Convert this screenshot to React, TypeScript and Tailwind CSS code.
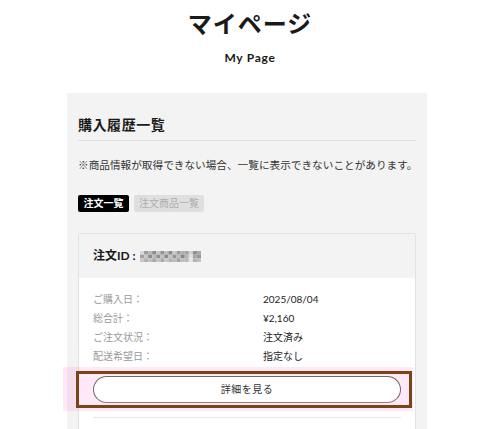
import React from "react";

const mosaic = [
  [0xd8, 0x9a, 0xb8, 0x8c, 0xc4, 0x94, 0xbc, 0x88, 0xc8, 0x9c, 0xb0, 0xa4, 0xd0, 0x90, 0xa8],
  [0xa0, 0xc8, 0x8c, 0xbc, 0x90, 0xc0, 0x8a, 0xc4, 0x94, 0xbc, 0x88, 0xb4, 0xe0, 0xa8, 0x98],
  [0xc8, 0xb0, 0xc0, 0xa8, 0xc4, 0xac, 0xc8, 0xb0, 0xbc, 0xa4, 0xc0, 0xb8, 0xe4, 0xb4, 0xc0],
];

function Mosaic() {
  return (
    <svg width="61" height="11" viewBox="0 0 60 12" preserveAspectRatio="none" className="block">
      {mosaic.map((row, r) =>
        row.map((v, c) => {
          const h = v.toString(16);
          return <rect key={`${r}-${c}`} x={c * 4} y={r * 4} width="4" height="4" fill={`#${h}${h}${h}`} />;
        })
      )}
    </svg>
  );
}

const rows: [string, string][] = [
  ["ご購入日：", "2025/08/04"],
  ["総合計：", "¥2,160"],
  ["ご注文状況：", "注文済み"],
  ["配送希望日：", "指定なし"],
];

export default function App() {
  return (
    <div className="min-h-[429px] h-[429px] overflow-hidden bg-white text-[#1a1a1a] font-['Lato','Noto_Sans_CJK_JP',sans-serif]">
      <h1 className="pt-[9px] text-center text-[24px] font-bold leading-[30px] tracking-[0.04em]">マイページ</h1>
      <p className="mt-[12px] text-center text-[12px] font-bold leading-[14px] tracking-[0.06em]">My Page</p>

      <div className="ml-[67px] mt-[28px] w-[360px] bg-[#f3f3f3] px-[11px] pt-[22px] pb-[40px]">
        <h2 className="border-b border-[#dedede] pb-[5px] text-[14px] font-bold leading-[20px] tracking-[0.04em]">
          購入履歴一覧
        </h2>
        <p className="mt-[16px] text-[10.65px] leading-[16px] text-[#333] whitespace-nowrap">
          ※商品情報が取得できない場合、一覧に表示できないことがあります。
        </p>

        <div className="mt-[22px] flex gap-[5px]">
          <span className="flex h-[17px] items-center rounded-[2px] bg-black px-[5.5px] text-[10px] font-bold text-white">
            注文一覧
          </span>
          <span className="flex h-[17px] items-center rounded-[2px] bg-[#dfdfdf] px-[5px] text-[10px] text-[#adadad]">
            注文商品一覧
          </span>
        </div>

        <div className="mt-[21px] rounded-[2px] border border-[#e2e2e2] bg-white">
          <div className="flex h-[44px] items-center bg-[#f3f3f3] px-[14px]">
            <span className="text-[12px] font-bold leading-[16px]">注文ID :</span>
            <span className="ml-[4px]">
              <Mosaic />
            </span>
          </div>
          <div className="px-[14px] pt-[12px]">
            <div className="grid grid-cols-[170px_1fr] text-[10px] leading-[19px]">
              {rows.map(([k, v]) => (
                <React.Fragment key={k}>
                  <span className="text-[#9a9a9a]">{k}</span>
                  <span className="text-[#222]">{v}</span>
                </React.Fragment>
              ))}
            </div>

            <div className="relative mt-[10px]">
              <div className="pointer-events-none absolute -left-[30px] -right-[12px] -top-[9px] -bottom-[8px] bg-[rgba(255,0,170,0.09)]" />
              <button className="relative flex h-[27px] w-full items-center justify-center rounded-full border border-[#6a6a6a] border-b-[#a8708a] bg-white text-[10px] tracking-[0.05em] text-[#333]">
                詳細を見る
              </button>
              <div className="pointer-events-none absolute -left-[17px] -right-[11px] -top-[5px] -bottom-[5px] border-[3px] border-[#7a4516]" />
            </div>

            <div className="mt-[14px] border-t border-[#e8e8e8] pt-[20px]" />
          </div>
        </div>
      </div>
    </div>
  );
}
